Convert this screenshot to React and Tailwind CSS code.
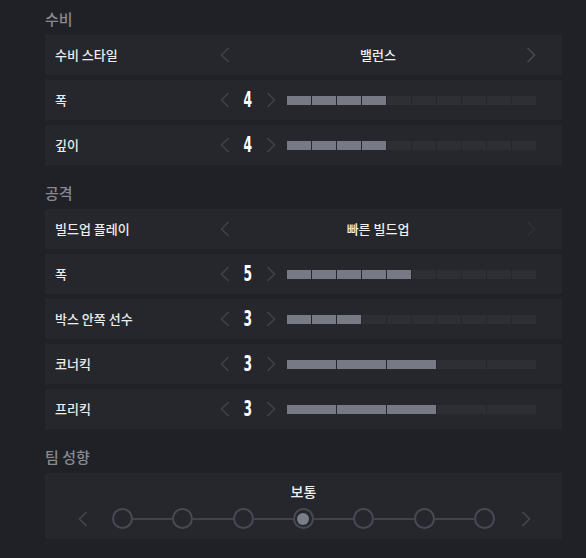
import React from 'react';

const Chevron = ({ dir = 'left', className = 'text-[#3f4147]' }) => (
    <svg width="10" height="16" viewBox="0 0 10 16" className={className} fill="none">
        <polyline
            points={dir === 'left' ? '8.5,1 1.5,8 8.5,15' : '1.5,1 8.5,8 1.5,15'}
            stroke="currentColor"
            strokeWidth="1.7"
        />
    </svg>
);

const Heading = ({ children, className = '' }) => (
    <div className={`h-6 flex items-center text-[15px] font-medium text-[#878990] ${className}`}>
        {children}
    </div>
);

// Rangée avec un choix texte (수비 스타일, 빌드업 플레이)
const SelectRow = ({ label, value, rightDim = false }) => (
    <div className="h-10 flex items-center bg-[#25272c] pl-[10px] pr-[21px]">
        <div className="w-[160px] text-[13px] font-medium text-[#ececec]">{label}</div>
        <div className="w-5 flex justify-center">
            <Chevron dir="left" />
        </div>
        <div className="flex-1 text-center text-[13px] font-medium text-[#f0f0f0]">{value}</div>
        <div className="w-5 flex justify-center">
            <Chevron dir="right" className={rightDim ? 'text-[#2e3035]' : 'text-[#46484e]'} />
        </div>
    </div>
);

// Rangée avec une valeur numérique et une barre
const ValueRow = ({ label, value, segments = 10 }) => {
    const bars = Array.from({ length: segments }, (_, i) => i);
    return (
        <div className="h-10 flex items-center bg-[#25272c] pl-[10px]">
            <div className="w-[160px] text-[13px] font-medium text-[#ececec]">{label}</div>
            <div className="w-5 flex justify-center">
                <Chevron dir="left" />
            </div>
            <div
                className="w-[26px] text-center text-[22px] font-bold text-white leading-none"
                style={{ fontFamily: '"DejaVu Sans Condensed", "Liberation Sans", sans-serif' }}
            >
                <span className="inline-block scale-x-[0.62]">{value}</span>
            </div>
            <div className="w-5 flex justify-center">
                <Chevron dir="right" />
            </div>
            <div className="ml-[6px] w-[249px] flex gap-px">
                {bars.map((i) => (
                    <div
                        key={i}
                        className={`flex-1 h-[9px] ${i < value ? 'bg-[#777a84]' : 'bg-[#2d2f34]'}`}
                    />
                ))}
            </div>
        </div>
    );
};

const Dot = ({ active }) => (
    <div className="w-[21px] h-[21px] rounded-full border-2 border-[#474a53] flex items-center justify-center shrink-0">
        {active && <div className="w-[12px] h-[12px] rounded-full bg-[#7b7e88]" />}
    </div>
);

export default function App() {
    const dots = [0, 1, 2, 3, 4, 5, 6];

    return (
        <div
            className="w-[586px] h-[558px] bg-[#1f2126] overflow-hidden pl-[45px] pt-[7px]"
            style={{ fontFamily: '"Noto Sans CJK KR", "Noto Sans", sans-serif' }}
        >
            <div className="w-[517px]">
                {/* 수비 */}
                <Heading className="mb-1">수비</Heading>
                <div className="flex flex-col gap-[5px]">
                    <SelectRow label="수비 스타일" value="밸런스" />
                    <ValueRow label="폭" value={4} />
                    <ValueRow label="깊이" value={4} />
                </div>

                {/* 공격 */}
                <Heading className="mt-4 mb-1">공격</Heading>
                <div className="flex flex-col gap-[5px]">
                    <SelectRow label="빌드업 플레이" value="빠른 빌드업" rightDim />
                    <ValueRow label="폭" value={5} />
                    <ValueRow label="박스 안쪽 선수" value={3} />
                    <ValueRow label="코너킥" value={3} segments={5} />
                    <ValueRow label="프리킥" value={3} segments={5} />
                </div>

                {/* 팀 성향 */}
                <Heading className="mt-4 mb-1">팀 성향</Heading>
                <div className="bg-[#25272c] pt-2 pb-[10px]">
                    <div className="h-5 flex items-center justify-center text-[14px] font-medium text-[#f0f0f0]">
                        보통
                    </div>
                    <div className="mt-[7px] flex items-center pl-[28px]">
                        <div className="w-5 flex justify-center">
                            <Chevron dir="left" className="text-[#44464c]" />
                        </div>
                        <div className="ml-[19px] w-[383px] flex items-center">
                            {dots.map((i) => (
                                <React.Fragment key={i}>
                                    {i > 0 && <div className="flex-1 h-[2px] bg-[#41434b]" />}
                                    <Dot active={i === 3} />
                                </React.Fragment>
                            ))}
                        </div>
                        <div className="ml-[21px] w-5 flex justify-center">
                            <Chevron dir="right" className="text-[#44464c]" />
                        </div>
                    </div>
                </div>
            </div>
        </div>
    );
}
